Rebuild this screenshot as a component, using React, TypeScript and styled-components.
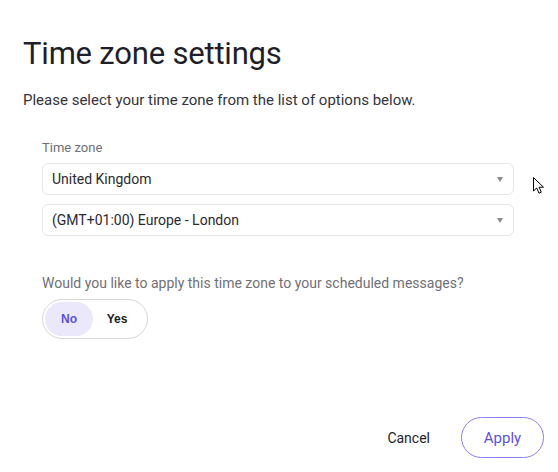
import styled, { createGlobalStyle } from "styled-components";

const GlobalStyle = createGlobalStyle`
  body {
    margin: 0;
    background: #ffffff;
    font-family: Roboto, "Open Sans", sans-serif;
  }
`;

const Page = styled.div`
  position: relative;
  display: flex;
  flex-direction: column;
  width: 558px;
  height: 472px;
  box-sizing: border-box;
  padding: 34px 14px 14px 23px;
  overflow: hidden;
`;

const Title = styled.h1`
  margin: 0;
  font-size: 31px;
  line-height: 40px;
  font-weight: 400;
  color: #1f1f2c;
  letter-spacing: -0.2px;
`;

const Subtitle = styled.p`
  margin: 14px 0 0;
  font-size: 15px;
  line-height: 24px;
  color: #34343e;
`;

const Form = styled.div`
  display: flex;
  flex-direction: column;
  width: 472px;
  margin: 27px 0 0 19px;
`;

const Label = styled.div`
  font-size: 13px;
  line-height: 18px;
  color: #6e6e78;
  margin-bottom: 6px;
`;

const Selects = styled.div`
  display: flex;
  flex-direction: column;
  gap: 9px;
`;

const Select = styled.div`
  display: flex;
  align-items: center;
  justify-content: space-between;
  height: 32px;
  box-sizing: border-box;
  padding: 0 10px 0 9px;
  border: 1px solid #e6e6ec;
  border-radius: 6px;
  font-size: 14px;
  color: #2a2a33;
`;

const Arrow = styled.span`
  width: 0;
  height: 0;
  border-left: 3.5px solid transparent;
  border-right: 3.5px solid transparent;
  border-top: 5px solid #8a8a90;
`;

const Question = styled.div`
  margin-top: 37px;
  font-size: 14px;
  line-height: 20px;
  color: #707078;
`;

const Toggle = styled.div`
  display: flex;
  align-items: center;
  width: 106px;
  height: 40px;
  box-sizing: border-box;
  margin-top: 6px;
  padding: 2px;
  border: 1px solid #d6d6dc;
  border-radius: 20px;
`;

const ToggleOption = styled.div<{ $active?: boolean }>`
  display: flex;
  align-items: center;
  justify-content: center;
  width: 48px;
  height: 34px;
  border-radius: 17px;
  font-family: "Liberation Sans", Arial, sans-serif;
  font-size: 12px;
  font-weight: 700;
  background: ${(p) => (p.$active ? "#ebe8fb" : "transparent")};
  color: ${(p) => (p.$active ? "#5b4fe0" : "#1d1d24")};
`;

const Footer = styled.div`
  display: flex;
  justify-content: flex-end;
  align-items: center;
  gap: 31px;
  margin-top: auto;
`;

const CancelButton = styled.button`
  background: none;
  border: none;
  padding: 0;
  font-family: inherit;
  font-size: 14px;
  font-weight: 400;
  color: #23232f;
`;

const ApplyButton = styled.button`
  width: 83px;
  height: 41px;
  background: #ffffff;
  border: 1.5px solid #8a80ee;
  border-radius: 21px;
  font-family: inherit;
  font-size: 15px;
  font-weight: 400;
  color: #5d50e6;
`;

const Cursor = styled.svg`
  position: absolute;
  left: 532px;
  top: 176px;
`;

export default function App() {
  return (
    <>
      <GlobalStyle />
      <Page>
        <Title>Time zone settings</Title>
        <Subtitle>Please select your time zone from the list of options below.</Subtitle>
        <Form>
          <Label>Time zone</Label>
          <Selects>
            <Select>
              United Kingdom
              <Arrow />
            </Select>
            <Select>
              (GMT+01:00) Europe - London
              <Arrow />
            </Select>
          </Selects>
          <Question>Would you like to apply this time zone to your scheduled messages?</Question>
          <Toggle>
            <ToggleOption $active>No</ToggleOption>
            <ToggleOption>Yes</ToggleOption>
          </Toggle>
        </Form>
        <Footer>
          <CancelButton>Cancel</CancelButton>
          <ApplyButton>Apply</ApplyButton>
        </Footer>
        <Cursor width="14" height="20" viewBox="0 0 14 20">
          <path
            d="M1.5 1.5 L1.5 15 L4.7 12 L7 17.2 L9.3 16.2 L7.1 11.2 L11.5 11.2 Z"
            fill="#ffffff"
            stroke="#000000"
            strokeWidth="1"
            strokeLinejoin="miter"
          />
        </Cursor>
      </Page>
    </>
  );
}
